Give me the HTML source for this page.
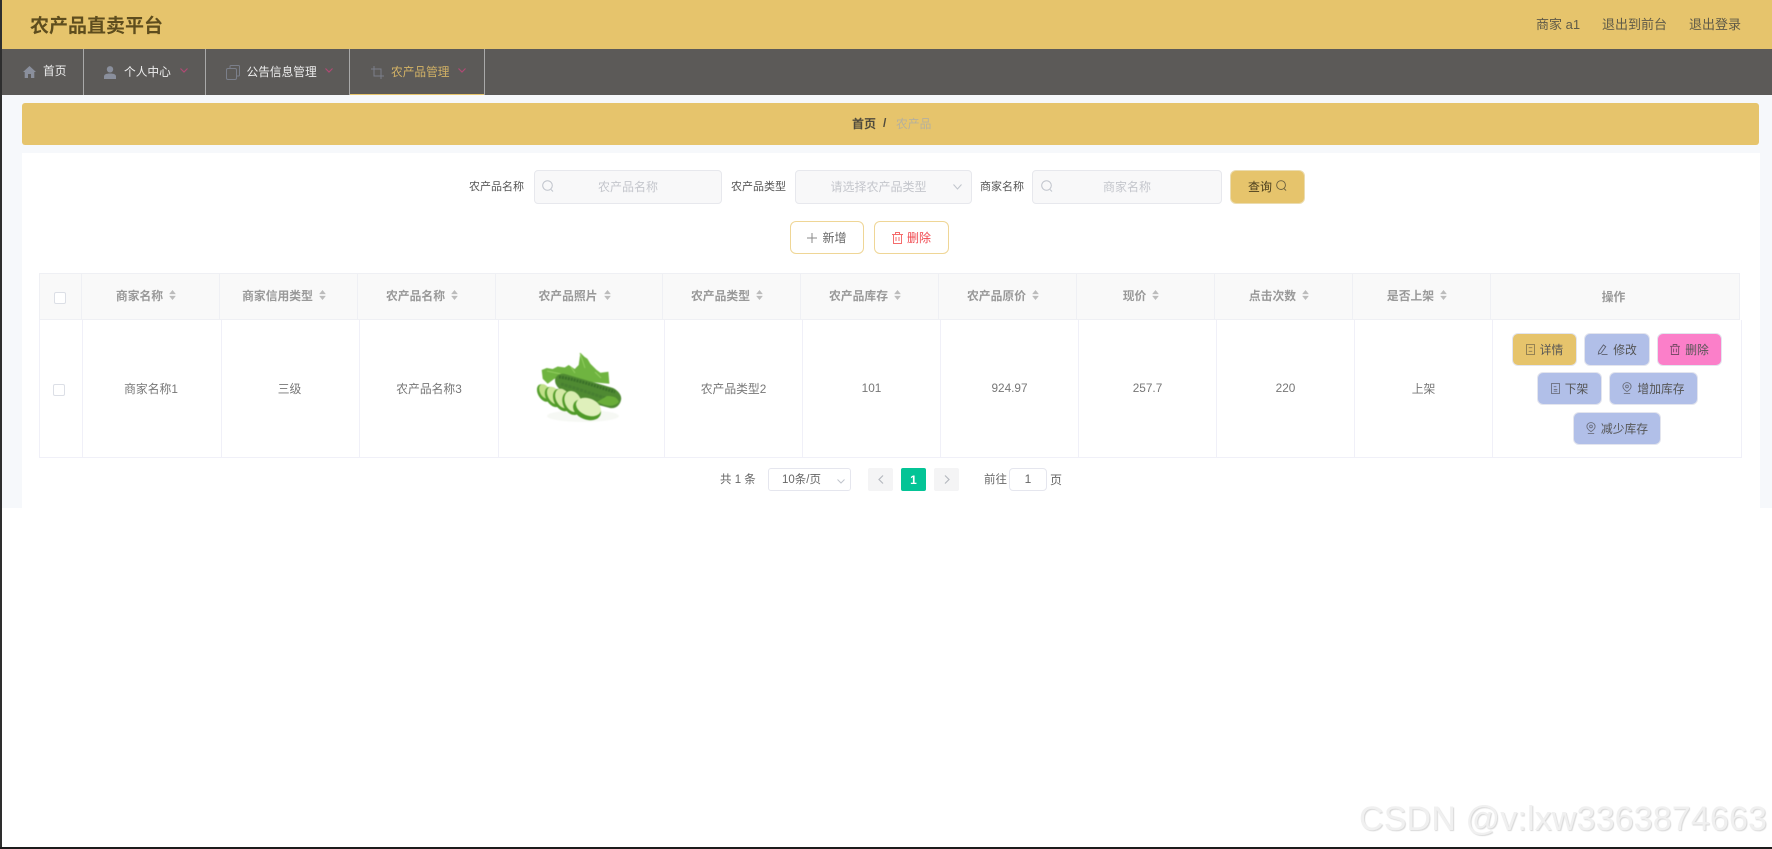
<!DOCTYPE html>
<html lang="zh">
<head>
<meta charset="utf-8">
<title>农产品直卖平台</title>
<style>
*{box-sizing:border-box;margin:0;padding:0}
html,body{width:1772px;height:849px;overflow:hidden;background:#fff;font-family:"Liberation Sans","Noto Sans CJK SC",sans-serif;font-size:12px}
#w{position:absolute;left:0;top:0;width:1772px;height:849px;filter:blur(.35px)}
.a{position:absolute}
.c{position:absolute;display:flex;align-items:center;justify-content:center;white-space:nowrap}
svg{display:block;flex:none}
.th{top:272px;height:46px;color:#999;font-weight:700;padding-right:9px;gap:6px;font-size:11.800px}
.td{top:320px;height:136px;color:#777;font-size:11.800px}
.vh{position:absolute;top:273px;height:47px;width:1px;background:#eff0f4}
.vr{position:absolute;top:320px;height:138px;width:1px;background:#f0f0f8}
.btn{border:1px solid #e3e5ee;border-radius:6px;height:33px;color:#555;gap:5px;font-size:11.800px;padding-bottom:1px}
.blue{background:#b1bfe8}
.pg{top:468px;height:23px;width:25px;border-radius:2px;background:#f4f4f5;color:#bbb}
.nv{color:#eee;font-size:11.700px}
.sep{position:absolute;top:49px;width:1.500px;height:46px;background:#a9a9a9}
</style>
</head>
<body>
<div id="w">
<div class="a" style="left:0;top:0;width:1772px;height:508px;background:#f6f8fb"></div>

<!-- header -->
<div class="a" style="left:0;top:0;width:1772px;height:49px;background:#e6c46c"></div>
<div class="c" style="left:30px;top:9px;height:30px;font-size:19px;font-weight:700;color:#5e4d1e">农产品直卖平台</div>
<div class="c" style="left:1536px;top:13px;height:20px;font-size:13px;color:#5f5a48">商家 a1</div>
<div class="c" style="left:1602px;top:13px;height:20px;font-size:13px;color:#5f5a48">退出到前台</div>
<div class="c" style="left:1689px;top:13px;height:20px;font-size:13px;color:#5f5a48">退出登录</div>

<!-- nav -->
<div class="a" style="left:0;top:49px;width:1772px;height:46px;background:#5c5a58"></div>
<div class="sep" style="left:82.500px"></div>
<div class="sep" style="left:205px;width:1px"></div>
<div class="sep" style="left:349px;width:1px"></div>
<div class="sep" style="left:483.500px"></div>
<div class="a" style="left:350px;top:94px;width:134px;height:1px;background:#e6c46c"></div>

<svg class="a" style="left:23px;top:66px" width="13" height="12" viewBox="0 0 13 12"><path d="M6.500 0L13 6h-1.700v6H8V8H5v4H1.700V6H0z" fill="#8a8f9c"/></svg>
<div class="c nv" style="left:43px;top:60px;height:20px">首页</div>

<svg class="a" style="left:104px;top:66px" width="12" height="13" viewBox="0 0 12 13"><circle cx="6" cy="3.300" r="3.200" fill="#8a8f9c"/><path d="M0 13V10.500C0 8.500 2 7.500 6 7.500s6 1 6 3V13z" fill="#8a8f9c"/></svg>
<div class="c nv" style="left:124px;top:61px;height:20px">个人中心</div>
<svg class="a" style="left:179.500px;top:68px" width="8" height="5" viewBox="0 0 8 5"><path d="M.5.500L4 4 7.500.500" fill="none" stroke="#b04a74" stroke-width="1.200"/></svg>

<svg class="a" style="left:226px;top:65px" width="14" height="15" viewBox="0 0 14 15"><path d="M4 3V1.500A1 1 0 0 1 5 .500h7.500a1 1 0 0 1 1 1V10a1 1 0 0 1-1 1H11" fill="none" stroke="#7b7f8a"/><rect x=".5" y="3.500" width="10" height="11" rx="1.500" fill="none" stroke="#7b7f8a"/></svg>
<div class="c nv" style="left:246.500px;top:61px;height:20px">公告信息管理</div>
<svg class="a" style="left:325px;top:68px" width="8" height="5" viewBox="0 0 8 5"><path d="M.5.500L4 4 7.500.500" fill="none" stroke="#b04a74" stroke-width="1.200"/></svg>

<svg class="a" style="left:371px;top:66px" width="13" height="13" viewBox="0 0 13 13"><path d="M3 0v10h10M0 3h10v10" fill="none" stroke="#7b7f8a"/></svg>
<div class="c nv" style="left:391px;top:61px;height:20px;color:#d4b366">农产品管理</div>
<svg class="a" style="left:458px;top:68px" width="8" height="5" viewBox="0 0 8 5"><path d="M.5.500L4 4 7.500.500" fill="none" stroke="#b04a74" stroke-width="1.200"/></svg>

<!-- breadcrumb -->
<div class="a" style="left:22px;top:103px;width:1737px;height:42px;background:#e6c46c;border-radius:3px"></div>
<div class="c" style="left:852px;top:113px;height:20px;font-weight:700;color:#4f4a3c">首页</div>
<div class="c" style="left:883px;top:113px;height:20px;font-weight:700;color:#4f4a3c">/</div>
<div class="c" style="left:896px;top:113px;height:20px;color:#b5b09d;font-size:11.800px">农产品</div>

<!-- panel -->
<div class="a" style="left:22px;top:153px;width:1738px;height:355px;background:#fff"></div>

<!-- search -->
<div class="c" style="left:469px;top:176px;height:20px;font-size:11px;color:#555">农产品名称</div>
<div class="c" style="left:534px;top:170px;width:188px;height:34px;background:#f8f8f9;border:1px solid #e7e8ed;border-radius:4px;color:#c4c6cc;padding-bottom:2px">农产品名称</div>
<svg class="a" style="left:542px;top:180px" width="12" height="13" viewBox="0 0 12 13"><circle cx="5.500" cy="5.500" r="4.800" fill="none" stroke="#c0c4cc"/><path d="M9 9.500l2 2" stroke="#c0c4cc"/></svg>

<div class="c" style="left:731px;top:176px;height:20px;font-size:11px;color:#555">农产品类型</div>
<div class="c" style="left:795px;top:170px;width:177px;height:34px;background:#f8f8f9;border:1px solid #e7e8ed;border-radius:4px;color:#c4c6cc;padding-right:10px;padding-bottom:2px">请选择农产品类型</div>
<svg class="a" style="left:953px;top:184px" width="9" height="6" viewBox="0 0 9 6"><path d="M.5.500L4.500 5 8.500.500" fill="none" stroke="#c0c4cc"/></svg>

<div class="c" style="left:980px;top:176px;height:20px;font-size:11px;color:#555">商家名称</div>
<div class="c" style="left:1032px;top:170px;width:190px;height:34px;background:#f8f8f9;border:1px solid #e7e8ed;border-radius:4px;color:#c4c6cc;padding-bottom:2px">商家名称</div>
<svg class="a" style="left:1041px;top:180px" width="12" height="13" viewBox="0 0 12 13"><circle cx="5.500" cy="5.500" r="4.800" fill="none" stroke="#c0c4cc"/><path d="M9 9.500l2 2" stroke="#c0c4cc"/></svg>

<div class="c" style="left:1230px;top:170px;width:75px;height:34px;background:#e6c46c;border:1px solid #ebdcb0;border-radius:6px;color:#4a3d1c;gap:4px;padding-bottom:2px">查询<svg width="11" height="12" viewBox="0 0 12 13"><circle cx="5.500" cy="5.500" r="4.800" fill="none" stroke="#6b5f3e"/><path d="M9 9.500l2 2" stroke="#6b5f3e"/></svg></div>

<div class="c" style="left:790px;top:221px;width:74px;height:33px;background:#fff;border:1px solid #efd696;border-radius:6px;color:#666;gap:5px"><svg width="10" height="10" viewBox="0 0 10 10"><path d="M5 0v10M0 5h10" stroke="#8a8a8a"/></svg>新增</div>
<div class="c" style="left:874px;top:221px;width:75px;height:33px;background:#fff;border:1px solid #efd696;border-radius:6px;color:#f0484f;gap:4px"><svg width="11" height="12" viewBox="0 0 11 12"><path d="M0 2.500h11M3.500 2.500V.500h4v2M1.500 2.500V11.500h8V2.500M4 5v4M7 5v4" fill="none" stroke="#f56c6c"/></svg>删除</div>

<!-- table -->
<div class="a" style="left:39px;top:273px;width:1701px;height:47px;background:#f9f9f9;border:1px solid #eff0f4"></div>
<div class="a" style="left:39px;top:320px;width:1703px;height:138px;background:#fff;border:1px solid #f0f0f8;border-top:0"></div>

<div class="vh" style="left:81px"></div><div class="vh" style="left:219px"></div><div class="vh" style="left:357px"></div><div class="vh" style="left:495px"></div><div class="vh" style="left:662px"></div><div class="vh" style="left:800px"></div><div class="vh" style="left:938px"></div><div class="vh" style="left:1076px"></div><div class="vh" style="left:1214px"></div><div class="vh" style="left:1352px"></div><div class="vh" style="left:1490px"></div>
<div class="vr" style="left:82px"></div><div class="vr" style="left:221px"></div><div class="vr" style="left:359px"></div><div class="vr" style="left:498px"></div><div class="vr" style="left:664px"></div><div class="vr" style="left:802px"></div><div class="vr" style="left:940px"></div><div class="vr" style="left:1078px"></div><div class="vr" style="left:1216px"></div><div class="vr" style="left:1354px"></div><div class="vr" style="left:1492px"></div>

<div class="a" style="left:54px;top:292px;width:12px;height:12px;background:#fff;border:1px solid #dcdfe6;border-radius:2px"></div>

<div class="c th" style="left:82px;width:137px">商家名称<svg width="7" height="10" viewBox="0 0 8 12"><path d="M4 0l4 5H0zM0 7h8l-4 5z" fill="#bcbcbc"/></svg></div>
<div class="c th" style="left:220px;width:137px">商家信用类型<svg width="7" height="10" viewBox="0 0 8 12"><path d="M4 0l4 5H0zM0 7h8l-4 5z" fill="#bcbcbc"/></svg></div>
<div class="c th" style="left:358px;width:137px">农产品名称<svg width="7" height="10" viewBox="0 0 8 12"><path d="M4 0l4 5H0zM0 7h8l-4 5z" fill="#bcbcbc"/></svg></div>
<div class="c th" style="left:496px;width:166px">农产品照片<svg width="7" height="10" viewBox="0 0 8 12"><path d="M4 0l4 5H0zM0 7h8l-4 5z" fill="#bcbcbc"/></svg></div>
<div class="c th" style="left:663px;width:137px">农产品类型<svg width="7" height="10" viewBox="0 0 8 12"><path d="M4 0l4 5H0zM0 7h8l-4 5z" fill="#bcbcbc"/></svg></div>
<div class="c th" style="left:801px;width:137px">农产品库存<svg width="7" height="10" viewBox="0 0 8 12"><path d="M4 0l4 5H0zM0 7h8l-4 5z" fill="#bcbcbc"/></svg></div>
<div class="c th" style="left:939px;width:137px">农产品原价<svg width="7" height="10" viewBox="0 0 8 12"><path d="M4 0l4 5H0zM0 7h8l-4 5z" fill="#bcbcbc"/></svg></div>
<div class="c th" style="left:1077px;width:137px">现价<svg width="7" height="10" viewBox="0 0 8 12"><path d="M4 0l4 5H0zM0 7h8l-4 5z" fill="#bcbcbc"/></svg></div>
<div class="c th" style="left:1215px;width:137px">点击次数<svg width="7" height="10" viewBox="0 0 8 12"><path d="M4 0l4 5H0zM0 7h8l-4 5z" fill="#bcbcbc"/></svg></div>
<div class="c th" style="left:1353px;width:137px">是否上架<svg width="7" height="10" viewBox="0 0 8 12"><path d="M4 0l4 5H0zM0 7h8l-4 5z" fill="#bcbcbc"/></svg></div>
<div class="c th" style="left:1489px;width:249px;padding-right:0;top:273px">操作</div>

<div class="a" style="left:53px;top:384px;width:12px;height:12px;background:#fff;border:1px solid #dcdfe6;border-radius:2px"></div>
<div class="c td" style="left:82px;width:138px">商家名称1</div>
<div class="c td" style="left:221px;width:137px">三级</div>
<div class="c td" style="left:360px;width:138px">农产品名称3</div>
<div class="c td" style="left:665px;width:137px">农产品类型2</div>
<div class="c td" style="left:803px;width:137px">101</div>
<div class="c td" style="left:941px;width:137px">924.97</div>
<div class="c td" style="left:1079px;width:137px">257.7</div>
<div class="c td" style="left:1217px;width:137px">220</div>
<div class="c td" style="left:1355px;width:137px">上架</div>

<!-- cucumber -->
<svg class="a" style="left:535px;top:350px;filter:blur(.6px)" width="92" height="76" viewBox="0 0 92 76">
<ellipse cx="48" cy="66" rx="36" ry="6" fill="#f6f8f4"/>
<path d="M6.700 20l5-2 6 1 5-2.500 7 1 4-2.500 6 4 4-4 1.700-12.300 4 4 3 2 3 5 3 3 3 3 4 3 8-1 1 12-55-5-6.700 5-5-5z" fill="#6fb440"/>
<path d="M45 3l5 15M12 21l14 3M60 22l6 6M36 17l4 6" stroke="#92ce60" stroke-width="1" fill="none"/>
<path d="M20 30C21 25 25 23 30 24L78 38C84 41 87 46 86 50 85 55 81 59 75 58L60 54C44 48 20 43 20 30z" fill="#4f8a32"/>
<path d="M24 27C40 29 60 36 80 42" fill="none" stroke="#3a7029" stroke-width="3" stroke-dasharray="2 1"/>
<path d="M26 34C40 38 58 44 76 50" fill="none" stroke="#477f31" stroke-width="3" stroke-dasharray="3 1"/>
<path d="M62 52C70 56 78 58 84 52 82 47 78 46 72 46z" fill="#69ad38"/>
<ellipse cx="9" cy="43" rx="6" ry="9.500" transform="rotate(-30 9 43)" fill="#559f2d"/>
<ellipse cx="10" cy="41.500" rx="5" ry="8" transform="rotate(-30 10 41.500)" fill="#c0e088"/>
<ellipse cx="18" cy="47" rx="7" ry="11" transform="rotate(-30 18 47)" fill="#559f2d"/>
<ellipse cx="19" cy="45.500" rx="6" ry="9.500" transform="rotate(-30 19 45.500)" fill="#cde79a"/>
<ellipse cx="27" cy="50" rx="8" ry="12" transform="rotate(-28 27 50)" fill="#519a29"/>
<ellipse cx="28" cy="48.500" rx="7" ry="10.500" transform="rotate(-28 28 48.500)" fill="#d2e9a4"/>
<ellipse cx="37" cy="53" rx="9" ry="12.500" transform="rotate(-25 37 53)" fill="#519a29"/>
<ellipse cx="38" cy="51.500" rx="8" ry="11" transform="rotate(-25 38 51.500)" fill="#d8edb0"/>
<ellipse cx="52" cy="59.500" rx="14.500" ry="10" transform="rotate(22 52 59.500)" fill="#4f9a28"/>
<ellipse cx="53.500" cy="57" rx="13" ry="8.500" transform="rotate(22 53.500 57)" fill="#dff0bb"/>
</svg>

<!-- actions -->
<div class="c btn" style="left:1512px;top:333px;width:65px;background:#e6c46c"><svg width="9" height="11" viewBox="0 0 10 12"><path d="M.5.500h9v11h-9zM3 4h4M3 8h4" fill="none" stroke="#8a7a50"/></svg>详情</div>
<div class="c btn blue" style="left:1584px;top:333px;width:66px"><svg width="11" height="11" viewBox="0 0 12 12"><path d="M2 8l5-7 2.500 2-5 7-3 1zM5 11.500h6.500" fill="none" stroke="#5b5f6e"/></svg>修改</div>
<div class="c btn" style="left:1657px;top:333px;width:65px;background:#fb7fc9"><svg width="10" height="11" viewBox="0 0 11 12"><path d="M0 2.500h11M3.500 2.500V.500h4v2M1.500 2.500V11.500h8V2.500M4 5v4M7 5v4" fill="none" stroke="#7a4a68"/></svg>删除</div>
<div class="c btn blue" style="left:1537px;top:372px;width:65px"><svg width="9" height="11" viewBox="0 0 10 12"><path d="M.5.500h9v11h-9zM3 4h3M3 7h4M3 9h4" fill="none" stroke="#6b6f7e"/></svg>下架</div>
<div class="c btn blue" style="left:1609px;top:372px;width:89px"><svg width="10" height="12" viewBox="0 0 11 13"><path d="M5.500 10.500C2.500 8.500 1 7 1 4.800a4.500 4.300 0 0 1 9 0c0 2.200-1.500 3.700-4.500 5.700zM2 12.500h7" fill="none" stroke="#6b6f7e"/><circle cx="5.500" cy="4.800" r="1.500" fill="none" stroke="#6b6f7e"/></svg>增加库存</div>
<div class="c btn blue" style="left:1573px;top:412px;width:88px"><svg width="10" height="12" viewBox="0 0 11 13"><path d="M5.500 10.500C2.500 8.500 1 7 1 4.800a4.500 4.300 0 0 1 9 0c0 2.200-1.500 3.700-4.500 5.700zM2 12.500h7" fill="none" stroke="#6b6f7e"/><circle cx="5.500" cy="4.800" r="1.500" fill="none" stroke="#6b6f7e"/></svg>减少库存</div>

<!-- pagination -->
<div class="c" style="left:720px;top:469px;height:20px;color:#666;font-size:11.500px">共 1 条</div>
<div class="c" style="left:768px;top:468px;width:83px;height:23px;background:#fff;border:1px solid #e5e6ee;border-radius:3px;color:#666;padding-right:16px;font-size:11.500px;padding-bottom:1px">10条/页</div>
<svg class="a" style="left:837px;top:479px" width="8" height="5" viewBox="0 0 8 5"><path d="M.5.500L4 4 7.500.500" fill="none" stroke="#c0c4cc"/></svg>
<div class="c pg" style="left:868px"><svg width="6" height="9" viewBox="0 0 6 9"><path d="M5 .5L1 4.500 5 8.500" fill="none" stroke="#b5b8bf" stroke-width="1.200"/></svg></div>
<div class="c pg" style="left:901px;background:#04c496;color:#fff;font-weight:700">1</div>
<div class="c pg" style="left:934px"><svg width="6" height="9" viewBox="0 0 6 9"><path d="M1 .5L5 4.500 1 8.500" fill="none" stroke="#b5b8bf" stroke-width="1.200"/></svg></div>
<div class="c" style="left:984px;top:469px;height:20px;color:#666;font-size:11.500px">前往</div>
<div class="c" style="left:1009px;top:468px;width:38px;height:23px;background:#fff;border:1px solid #e5e6ee;border-radius:4px;color:#666;padding-bottom:1px">1</div>
<div class="c" style="left:1050px;top:469px;height:20px;color:#666">页</div>

<!-- frame -->
<div class="a" style="left:0;top:0;width:2px;height:849px;background:#2e2e2e"></div>
<div class="a" style="left:0;top:847px;width:1772px;height:2px;background:#1c1c1c"></div>

<!-- watermark -->
<div class="a" style="left:1359px;top:800px;font-size:34px;line-height:38px;letter-spacing:.15px;color:#f0f0f0;white-space:nowrap;text-shadow:1px 1px 1px #d8d8d8">CSDN @v:lxw3363874663</div>
</div>
</body>
</html>
